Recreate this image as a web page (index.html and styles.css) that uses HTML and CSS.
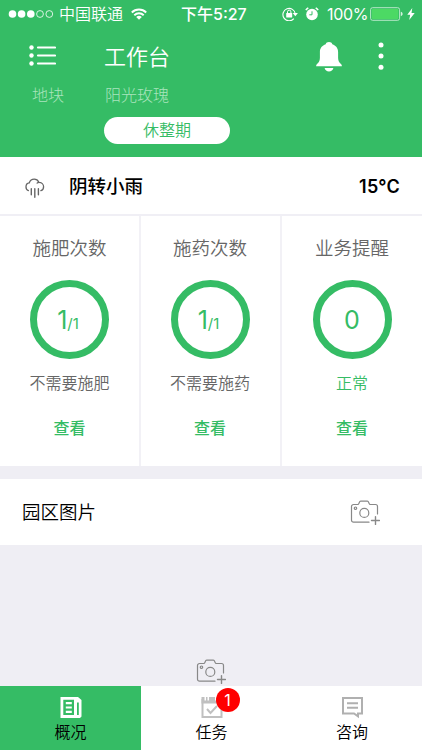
FILE: index.html
```html
<!DOCTYPE html>
<html lang="zh-CN">
<head>
<meta charset="utf-8">
<title>工作台</title>
<link rel="stylesheet" href="styles.css">
</head>
<body>
<svg class="defs" width="0" height="0" aria-hidden="true">
  <symbol id="camera" viewBox="0 0 30 26">
    <g fill="none" stroke="currentColor" stroke-width="1.2" stroke-linecap="round" stroke-linejoin="round">
      <path d="M19 22.200H3.500a2 2 0 0 1-2-2V6.500a2 2 0 0 1 2-2h4.200c1.600 0 1.200-3.300 3-3.300h6.600c1.800 0 1.400 3.300 3 3.300h5.200a2 2 0 0 1 2 2v7.500"/>
      <circle cx="14.300" cy="12.900" r="4.500"/>
      <circle cx="5.500" cy="8.200" r="1.200"/>
      <path d="M25.500 16.600v7.800M21.500 20.500h8" stroke-width="1.400"/>
    </g>
  </symbol>
</svg>
<div class="app">
  <header class="header">
    <div class="status">
      <svg class="signal" width="46" height="10" viewBox="0 0 46 10"><g fill="#fff"><circle cx="4.500" cy="5" r="3.800"/><circle cx="13.600" cy="5" r="3.800"/><circle cx="22.800" cy="5" r="3.800"/></g><g fill="none" stroke="#fff" stroke-width=".8"><circle cx="32" cy="5" r="3.400"/><circle cx="41.300" cy="5" r="3.400"/></g></svg>
      <span class="carrier">中国联通</span>
      <svg class="wifi" width="16" height="12" viewBox="0 0 16 12"><g fill="none" stroke="#fff" stroke-width="1.900"><path d="M.8 4.500a10.200 10.200 0 0 1 14.400 0M3.300 7.200a6.700 6.700 0 0 1 9.400 0"/></g><path d="M8 11.800 5.200 9a4 4 0 0 1 5.600 0z" fill="#fff"/></svg>
      <span class="time">下午5:27</span>
      <svg class="lock" width="17" height="14" viewBox="0 0 17 14"><path d="M11.800 11.700A6.200 6.200 0 1 1 13.300 7" fill="none" stroke="#fff" stroke-width="1.100"/><path d="M10.700 6h5.200l-2.600 3.200z" fill="#fff"/><rect x="4.200" y="6" width="6" height="4.400" rx=".5" fill="#fff"/><path d="M5.500 6V4.800a1.700 1.700 0 0 1 3.400 0V6" fill="none" stroke="#fff"/></svg>
      <svg class="alarm" width="14" height="14" viewBox="0 0 14 14"><circle cx="7" cy="7.500" r="5.800" fill="#fff"/><path d="M7 4.300v3.500H4.300" fill="none" stroke="#35bc65" stroke-width="1"/><path d="M.8 3.200A8 8 0 0 1 3.300 .9M13.200 3.200a8 8 0 0 0-2.500-2.300" fill="none" stroke="#fff" stroke-width="1.400"/></svg>
      <span class="percent">100%</span>
      <svg class="battery" width="34" height="14" viewBox="0 0 34 14"><rect x=".6" y=".7" width="29" height="12.600" rx="2" fill="none" stroke="#b7e8c8" stroke-width="1"/><rect x="1.900" y="2" width="26.400" height="10" rx=".8" fill="#4cd964"/><path d="M30.800 4.800c2.400.5 2.400 3.900 0 4.400z" fill="#d5f2de"/></svg>
      <svg class="bolt" width="8" height="12" viewBox="0 0 8 12"><path d="M5.300 0 .3 6.800h2.900L2.200 12l5.500-7H4.500z" fill="#fff"/></svg>
    </div>
    <div class="toolbar">
      <svg class="menu" width="28" height="22" viewBox="0 0 28 22"><g fill="#fff"><circle cx="3.500" cy="2.500" r="2.200"/><circle cx="3.500" cy="10.500" r="2.200"/><circle cx="3.500" cy="18.500" r="2.200"/></g><path d="M10 2.500h17M10 10.500h17M10 18.500h17" stroke="#fff" stroke-width="2.200" stroke-linecap="round"/></svg>
      <h1>工作台</h1>
      <svg class="bell" width="28" height="32" viewBox="0 0 28 32"><g fill="#fff"><path d="M14 2c-1.800 0-3 .8-3.300 2.300C7.200 5.400 4.900 8.200 4.900 12v6c0 3-1.400 5-2.900 5.900-.6.5-.9 1.200-.9 2.300h25.800c0-1.100-.3-1.800-.9-2.300-1.500-.9-2.900-2.900-2.900-5.900v-6c0-3.800-2.300-6.600-5.800-7.700C17 2.800 15.800 2 14 2z"/><path d="M9.600 28h8.800c-.5 2.300-2.200 3.500-4.400 3.500s-3.900-1.200-4.400-3.500z"/></g></svg>
      <svg class="more" width="6" height="28" viewBox="0 0 6 28"><g fill="#fff"><circle cx="3" cy="3" r="2.500"/><circle cx="3" cy="14" r="2.500"/><circle cx="3" cy="25.200" r="2.500"/></g></svg>
    </div>
    <div class="plot"><span>地块</span><span>阳光玫瑰</span></div>
    <div class="stage">休整期</div>
  </header>

  <section class="weather">
    <svg width="20" height="20" viewBox="0 0 20 20"><g fill="none" stroke="#666" stroke-width="1.300" stroke-linecap="round"><path d="M3.400 12.600C1.900 12 .9 10.500 1 8.700 1 6.600 2.500 5 4.300 4.800 5.100 2.500 6.900 1.200 9.200 1.200c2 0 3.800 1.200 4.700 3.100 2.700 0 4.700 2 4.700 4.400 0 1.900-1 3.400-2.700 4M12.100 5.100c.5-.5 1.100-.8 1.800-.8"/><path d="M6.300 10.800v6M9.800 10.800v8.400M13.400 10.800v6" stroke-width="1.400"/></g></svg>
    <span class="condition">阴转小雨</span>
    <span class="degrees">15°C</span>
  </section>

  <section class="stats">
    <div class="stat">
      <h2>施肥次数</h2>
      <div class="ring"><span>1</span><small>/1</small></div>
      <p>不需要施肥</p>
      <a>查看</a>
    </div>
    <div class="stat">
      <h2>施药次数</h2>
      <div class="ring"><span>1</span><small>/1</small></div>
      <p>不需要施药</p>
      <a>查看</a>
    </div>
    <div class="stat">
      <h2>业务提醒</h2>
      <div class="ring"><span>0</span></div>
      <p class="ok">正常</p>
      <a>查看</a>
    </div>
  </section>

  <section class="photos">
    <span>园区图片</span>
    <svg class="camera" width="30" height="26"><use href="#camera"/></svg>
  </section>

  <main class="gallery"><svg class="camera" width="30" height="26"><use href="#camera"/></svg></main>

  <nav class="tabs">
    <div class="tab active">
      <svg width="24" height="24" viewBox="0 0 24 24"><path d="M1.500 2h16v21h-16zM17.500 2h1.500l3.500 3v16.500L21 23h-3.500z" fill="#fff"/><path d="M4.300 4.800h10.700v15.200H4.300zM18 7.500h1.800v12.500H18z" fill="#35bc65"/><path d="M6.800 7h6v2.200h-6zM6.800 11.400h6v2.200h-6zM6.800 15.800h6V18h-6z" fill="#fff"/></svg>
      <span>概况</span>
    </div>
    <div class="tab">
      <div class="icon">
        <svg width="24" height="24" viewBox="0 0 24 24"><path d="M2.500 4v18h19V4" fill="none" stroke="#c0c0c0" stroke-width="2"/><path d="M1.500 2h3v3.500h1.500V2h1.500v3.500H9V2h6v3.500h3V2h4.500v6.500h-21z" fill="#c0c0c0"/><path d="m7 14 3.500 4 6.500-7" fill="none" stroke="#c0c0c0" stroke-width="2"/></svg>
        <b class="badge">1</b>
      </div>
      <span>任务</span>
    </div>
    <div class="tab">
      <svg width="24" height="24" viewBox="0 0 24 24"><g fill="none" stroke="#b0b0b0" stroke-width="2"><path d="M3 3h19v15.500h-4v2.800l-4-2.800H3z"/><path d="M7 8.300H18M7 12.800H18"/></g></svg>
      <span>咨询</span>
    </div>
  </nav>
</div>
</body>
</html>
```
FILE: styles.css
```css
* { box-sizing: border-box; }
body {
  margin: 0;
  font-family: "Noto Sans CJK SC", sans-serif;
  color: #000;
}
.defs { display: none; }
svg { display: block; flex: none; }
h1, h2, p { margin: 0; font-weight: 350; }
.app {
  width: 422px;
  height: 750px;
  display: flex;
  flex-direction: column;
  background: #efeef4;
  overflow: hidden;
}

.header { height: 157px; background: #35bc65; color: #fff; flex: none; }
.status {
  height: 28px;
  display: flex;
  align-items: center;
  padding-left: 8px;
  font-size: 16px;
  line-height: 28px;
  white-space: nowrap;
}
.carrier { width: 64px; margin-left: 5px; padding-bottom: 2px; font-weight: 350; }
.wifi { margin-left: 8px; }
.time { width: 68px; margin-left: 34px; padding-bottom: 1px; font-family: Inter, "Noto Sans CJK SC", sans-serif; font-weight: 500; font-size: 16px; }
.lock { margin-left: 33px; }
.alarm { margin-left: 6px; }
.percent { width: 41px; margin-left: 8px; font-family: Inter, sans-serif; font-size: 16px; font-weight: 400; letter-spacing: -.3px; }
.battery { margin-left: 2px; }
.bolt { margin-left: 3px; }

.toolbar { height: 56px; display: flex; align-items: center; padding-left: 28px; }
.toolbar h1 { width: 180px; margin-left: 48px; font-size: 22px; font-weight: 350; line-height: 54px; padding-bottom: 3px; }
.bell { margin-left: 31px; }
.more { margin-left: 35px; }
.plot {
  height: 21px;
  display: grid;
  grid-template-columns: 73px 1fr;
  padding-left: 32px;
  font-size: 16px;
  line-height: 20px;
  font-weight: 300;
  color: #a9e4bd;
}
.stage {
  width: 126px;
  height: 27px;
  margin: 12px 0 0 104px;
  border-radius: 14px;
  background: #fff;
  color: #35bc65;
  font-size: 16px;
  font-weight: 350;
  line-height: 25px;
  text-align: center;
}

.weather {
  height: 59px;
  flex: none;
  display: flex;
  align-items: center;
  padding: 2px 22px 0 25px;
  background: #fff;
  border-bottom: 2px solid #f0eff5;
}
.weather svg { margin-top: 3px; }
.condition { margin-left: 24px; padding-bottom: 3px; font-size: 18.500px; font-weight: 500; }
.degrees { margin-left: auto; font-family: Inter, sans-serif; font-size: 18px; font-weight: 600; letter-spacing: .2px; }

.stats { height: 250px; flex: none; display: grid; grid-template-columns: 141px 141px 140px; background: #fff; }
.stat { display: flex; flex-direction: column; align-items: center; border-right: 2px solid #f2f1f6; }
.stat:nth-child(2) { padding-right: 1px; }
.stat:last-child { border-right: 0; }
.stat h2 { margin-top: 18px; font-size: 18.500px; line-height: 27px; color: #666; }
.ring {
  width: 79px;
  height: 79px;
  margin-top: 19px;
  border: 7px solid #35bc65;
  border-radius: 50%;
  display: flex;
  justify-content: center;
  align-items: baseline;
  color: #35bc65;
  font-family: Inter, sans-serif;
  font-size: 25px;
  font-weight: 400;
  line-height: 66px;
}
.ring small { margin-right: 3px; font-size: 15px; }
.stat p { margin-top: 11px; font-size: 16px; line-height: 24px; color: #666; }
.stat .ok { color: #35bc65; }
.stat a { margin-top: 21px; font-size: 16px; line-height: 24px; font-weight: 500; color: #35bc65; }

.photos {
  height: 66px;
  flex: none;
  margin-top: 13px;
  display: flex;
  align-items: center;
  justify-content: space-between;
  padding: 1px 42px 0 22px;
  background: #fff;
  font-size: 18.500px;
  font-weight: 350;
}
.photos span { padding-bottom: 3px; }
.camera { color: #888; }
.gallery { flex: 1; display: flex; align-items: flex-end; justify-content: center; padding-bottom: 1px; }

.tabs { height: 64px; flex: none; display: grid; grid-template-columns: 141px 141px 140px; background: #fff; }
.tab { display: flex; flex-direction: column; align-items: center; padding-top: 9px; font-size: 16px; font-weight: 350; line-height: 24px; }
.active { background: #35bc65; }
.icon { position: relative; }
.badge {
  position: absolute;
  left: 16px;
  top: -7px;
  width: 24px;
  height: 24px;
  border-radius: 50%;
  background: #f00;
  color: #fff;
  font: 400 16px/24px Inter, sans-serif;
  text-align: center;
}
```
